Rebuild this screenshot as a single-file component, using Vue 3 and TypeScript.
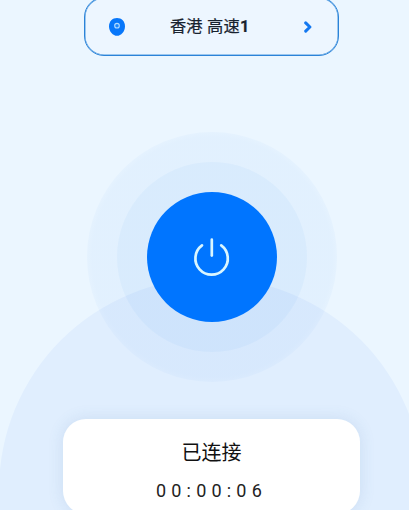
<script setup lang="ts">
import { ref } from 'vue'

const server = ref('香港 高速')
const node = ref('1')
const status = ref('已连接')
const elapsed = ref('00:00:06')
</script>

<template>
  <main class="screen">
    <div class="horizon"></div>
    <button class="server" type="button">
      <svg class="pin" viewBox="0 0 16 18" width="16" height="18">
        <path d="M8 0C3.400 0 0 3.400 0 8.200C0 13.600 4 17.800 8 17.800S16 13.600 16 8.200C16 3.400 12.600 0 8 0z" fill="#0877fa" />
        <circle cx="8" cy="7.700" r="2.300" fill="#1c86fb" stroke="#b4dcff" stroke-width="1.100" />
      </svg>
      <span class="server-name">{{ server }}<b>{{ node }}</b></span>
      <svg class="chevron" viewBox="0 0 8 12" width="8" height="12">
        <path d="M1.700 1.900L5.900 6L1.700 10.100" fill="none" stroke="#1478f0" stroke-width="3" stroke-linecap="round" stroke-linejoin="round" />
      </svg>
    </button>
    <div class="halo">
      <div class="ring">
        <button class="power" type="button">
          <svg viewBox="0 0 38 38" width="38" height="38" fill="none" stroke="#d9f6ff" stroke-width="2.700" stroke-linecap="round">
            <path d="M18.800 1.700V17.600" />
            <path d="M9 7.400A16.200 16.200 0 1 0 28.200 7.400" />
          </svg>
        </button>
      </div>
    </div>
    <section class="card">
      <div class="status">{{ status }}</div>
      <div class="elapsed">{{ elapsed }}</div>
    </section>
  </main>
</template>

<style>
body {
  background: #ebf6ff;
  overflow: hidden;
}
</style>

<style scoped>
.screen {
  position: relative;
  display: flex;
  flex-direction: column;
  align-items: center;
  box-sizing: border-box;
  width: 409px;
  height: 510px;
  padding-left: 14px;
  overflow: hidden;
  background: #ebf6ff;
  font-family: Roboto, "Noto Sans CJK SC", sans-serif;
}
.horizon {
  position: absolute;
  left: -1px;
  top: 278px;
  width: 424px;
  height: 424px;
  border-radius: 50%;
  background: #e0eefe;
}
button {
  padding: 0;
  font: inherit;
}
.server {
  position: relative;
  display: flex;
  flex: none;
  align-items: center;
  justify-content: space-between;
  box-sizing: border-box;
  width: 255px;
  height: 59px;
  margin-top: -3px;
  padding: 0 26px 0 23.500px;
  border: 1px solid #2b83d8;
  border-radius: 20px;
  background: #edf6ff;
  box-shadow: inset 0 0 0 0.500px #4b98df;
}
.server-name {
  margin-right: 9px;
  padding-top: 1px;
  color: #18222f;
  font-size: 16.300px;
  font-weight: 400;
  line-height: 20px;
  letter-spacing: 0.200px;
  -webkit-text-stroke: 0.200px #18222f;
}
.server-name b {
  font-weight: 700;
}
.halo,
.ring,
.power {
  position: relative;
  display: flex;
  flex: none;
  align-items: center;
  justify-content: center;
  border-radius: 50%;
}
.halo {
  width: 250px;
  height: 250px;
  margin-top: 76px;
  background: radial-gradient(closest-side, rgba(40, 125, 235, 0.048) 96%, rgba(40, 125, 235, 0.03) 100%);
}
.ring {
  width: 190px;
  height: 190px;
  background: rgba(0, 125, 235, 0.038);
}
.power {
  width: 130px;
  height: 130px;
  border: 0;
  background: #0075ff;
}
.card {
  position: relative;
  display: flex;
  flex: none;
  flex-direction: column;
  align-items: center;
  box-sizing: border-box;
  width: 297px;
  height: 95px;
  margin-top: 37px;
  padding-top: 20px;
  border-radius: 23px;
  background: #fff;
  box-shadow: 0 0 16px rgba(70, 120, 170, 0.14);
}
.status {
  color: #111;
  font-size: 20px;
  line-height: 28px;
}
.elapsed {
  margin-top: 13px;
  color: #222;
  font-size: 18px;
  line-height: 22px;
  letter-spacing: 5.200px;
}
</style>
